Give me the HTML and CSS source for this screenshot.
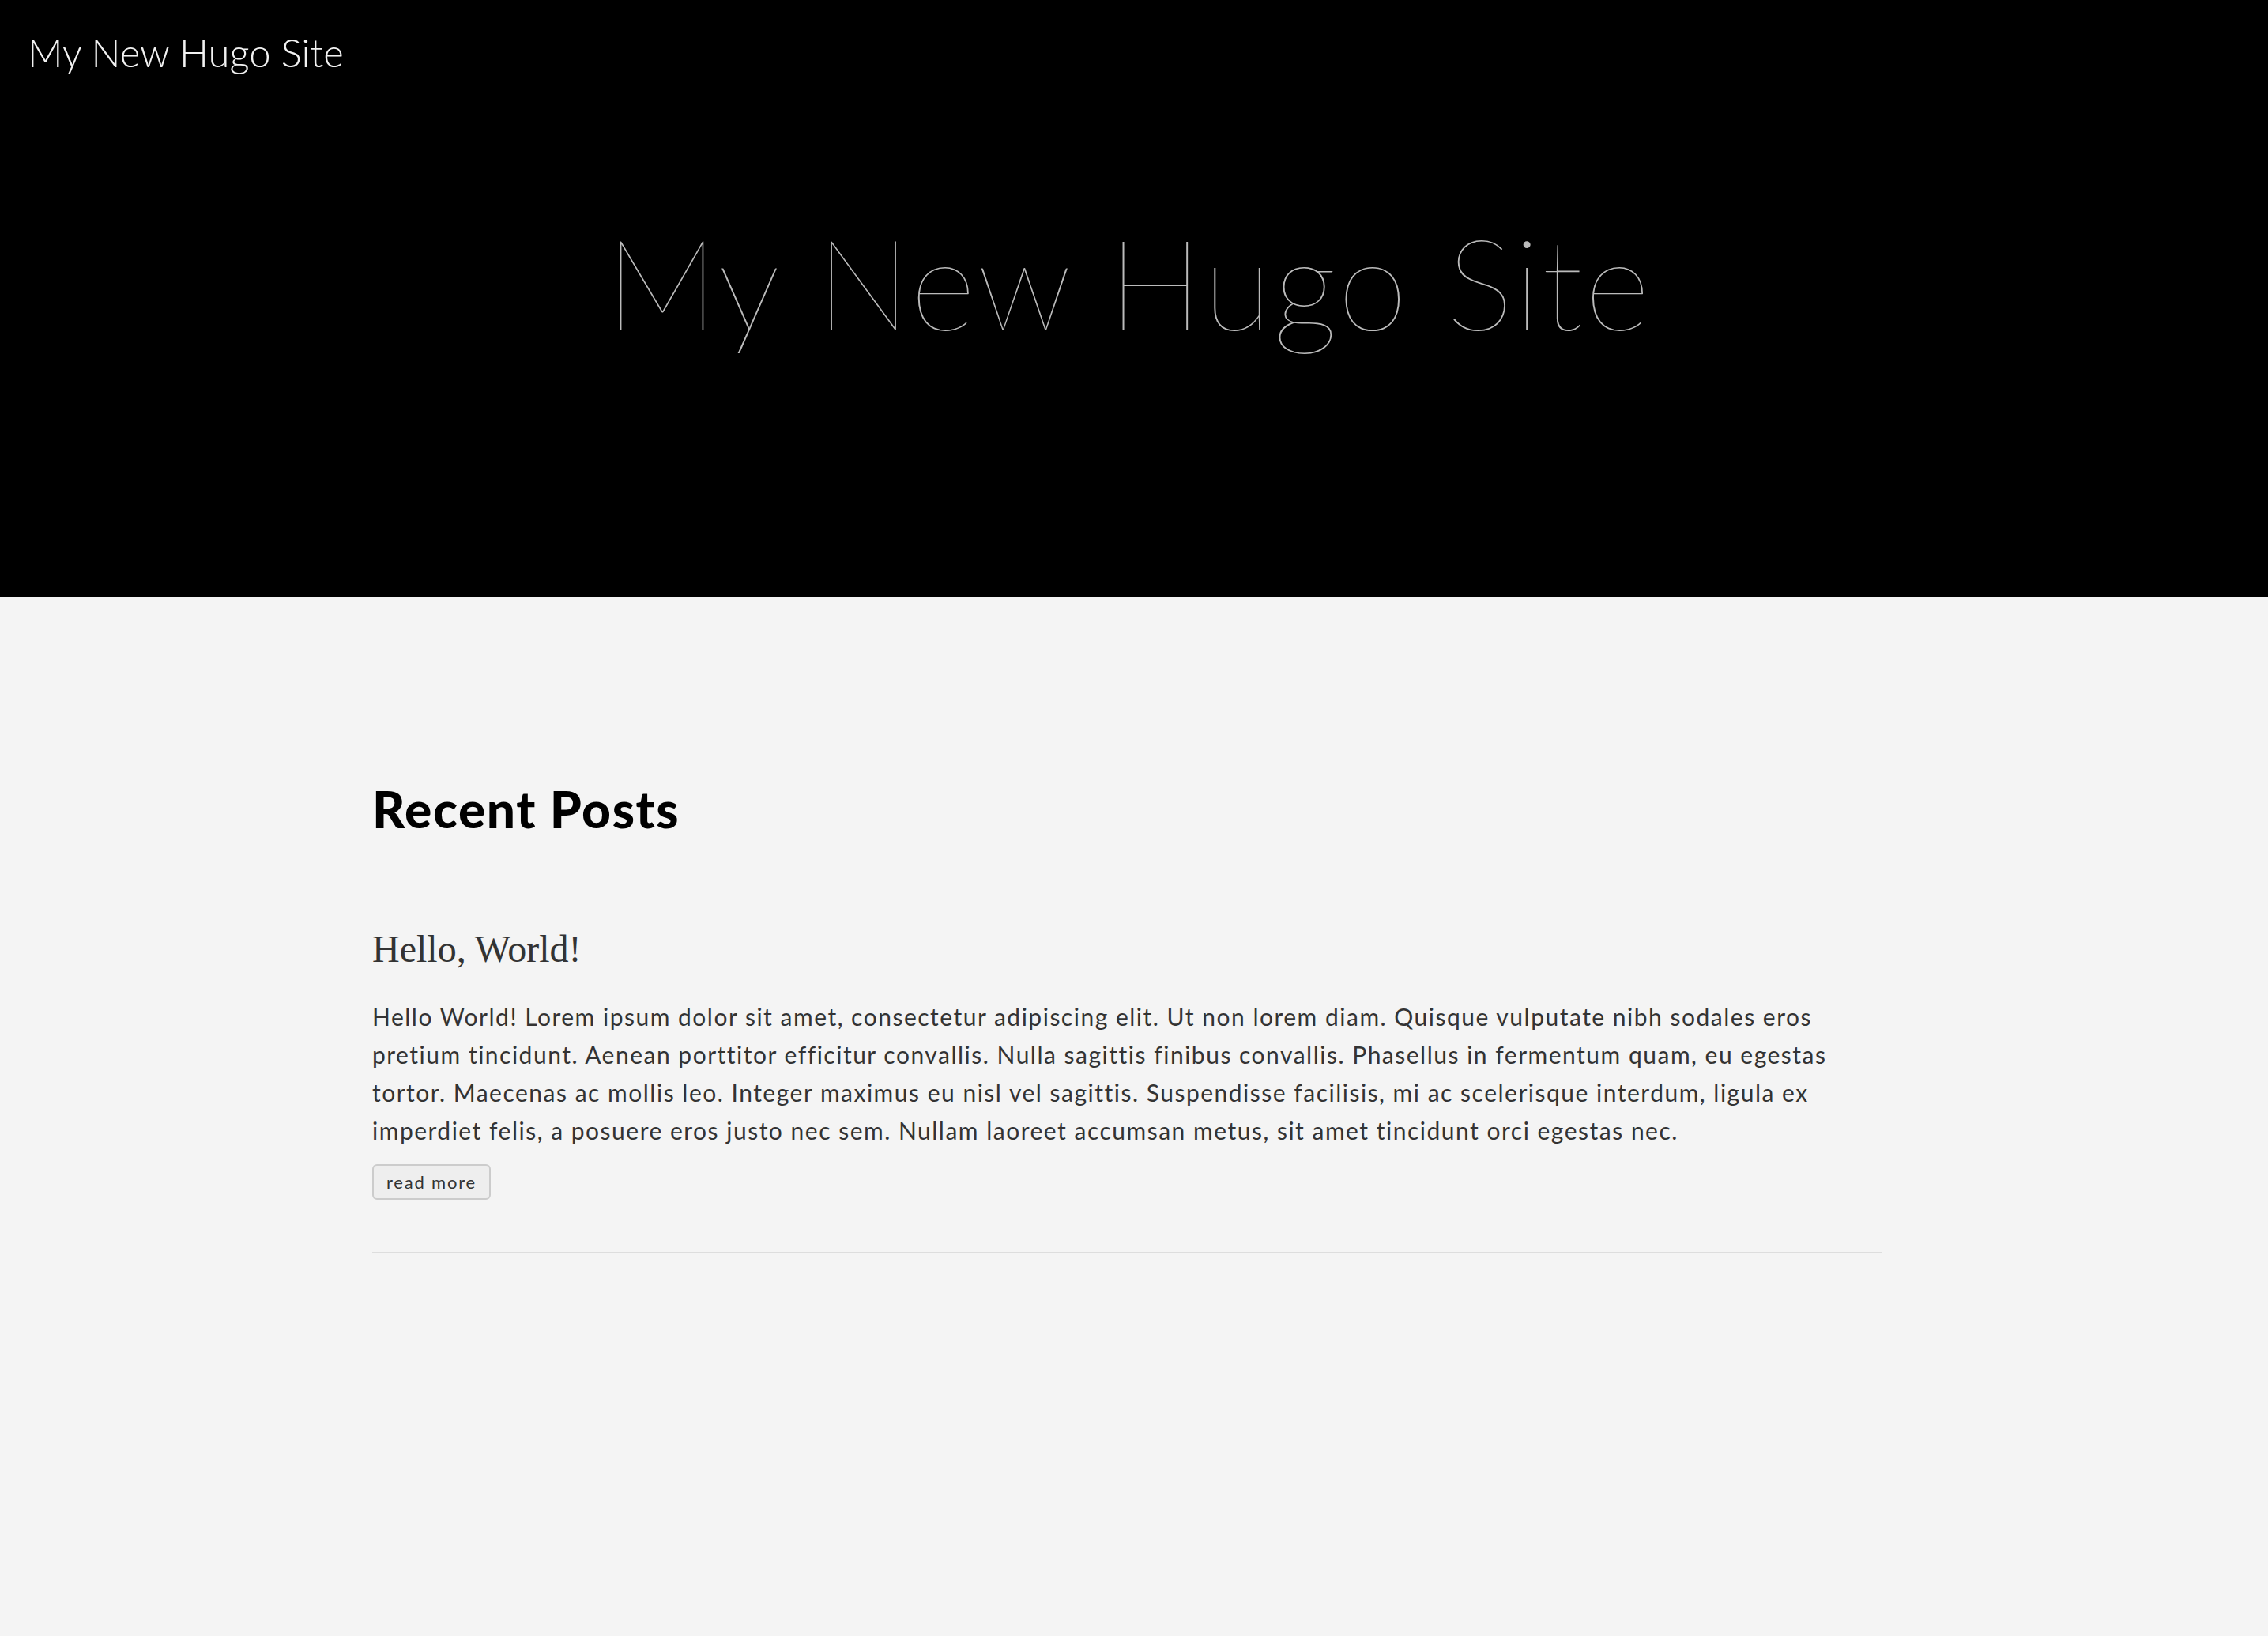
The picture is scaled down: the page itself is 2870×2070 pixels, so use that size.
FILE: index.html
```html
<!DOCTYPE html>
<html lang="en">
<head>
<meta charset="utf-8">
<title>My New Hugo Site</title>
<link rel="stylesheet" href="styles.css">
</head>
<body>
<header class="site-header">
  <nav class="nav"><a class="brand" href="#">My New Hugo Site</a></nav>
  <h1 class="hero-title">My New Hugo Site</h1>
</header>
<main class="content">
  <h2 class="section-title">Recent Posts</h2>
  <article class="post">
    <h3 class="post-title">Hello, World!</h3>
    <p class="post-summary">Hello World! Lorem ipsum dolor sit amet, consectetur adipiscing elit. Ut non lorem diam. Quisque vulputate nibh sodales eros pretium tincidunt. Aenean porttitor efficitur convallis. Nulla sagittis finibus convallis. Phasellus in fermentum quam, eu egestas tortor. Maecenas ac mollis leo. Integer maximus eu nisl vel sagittis. Suspendisse facilisis, mi ac scelerisque interdum, ligula ex imperdiet felis, a posuere eros justo nec sem. Nullam laoreet accumsan metus, sit amet tincidunt orci egestas nec.</p>
    <a class="read-more" href="#">read more</a>
  </article>
  <hr class="divider">
</main>
</body>
</html>
```

FILE: styles.css
```css
html, body {
  margin: 0;
  padding: 0;
  background: #f4f4f4;
}
body {
  font-family: Lato, "Open Sans", sans-serif;
  color: #333;
}
.site-header {
  background: #000;
  height: 756px;
  overflow: hidden;
}
.nav {
  padding: 36px 35px 0;
}
.brand {
  display: block;
  font-size: 49px;
  line-height: 60px;
  font-weight: 300;
  color: #f2f2f2;
  text-decoration: none;
}
.hero-title {
  margin: 164px 0 0;
  text-align: center;
  font-size: 160px;
  line-height: 192px;
  font-weight: 100;
  letter-spacing: 2px;
  color: #bbb;
  padding-right: 14px;
}
.content {
  width: 1910px;
  margin-left: 471px;
  padding-top: 229px;
}
.section-title {
  margin: 0;
  font-size: 64px;
  line-height: 77px;
  font-weight: 900;
  letter-spacing: 1.6px;
  color: #000;
}
.post-title {
  margin: 110px 0 0;
  font-family: "Liberation Serif", serif;
  font-weight: 400;
  font-size: 48px;
  line-height: 58px;
  color: #333;
}
.post-summary {
  margin: 32px 0 0;
  font-size: 30px;
  line-height: 48px;
  letter-spacing: 1.5px;
  color: #333;
}
.read-more {
  display: inline-block;
  margin-top: 19px;
  padding: 7px 16px;
  font-size: 22px;
  line-height: 27px;
  letter-spacing: 1.8px;
  color: #333;
  text-decoration: none;
  background: #eee;
  border: 2px solid #ccc;
  border-radius: 6px;
}
.divider {
  margin: 66px 0 0;
  border: 0;
  border-top: 2px solid #ddd;
  height: 0;
}
```
